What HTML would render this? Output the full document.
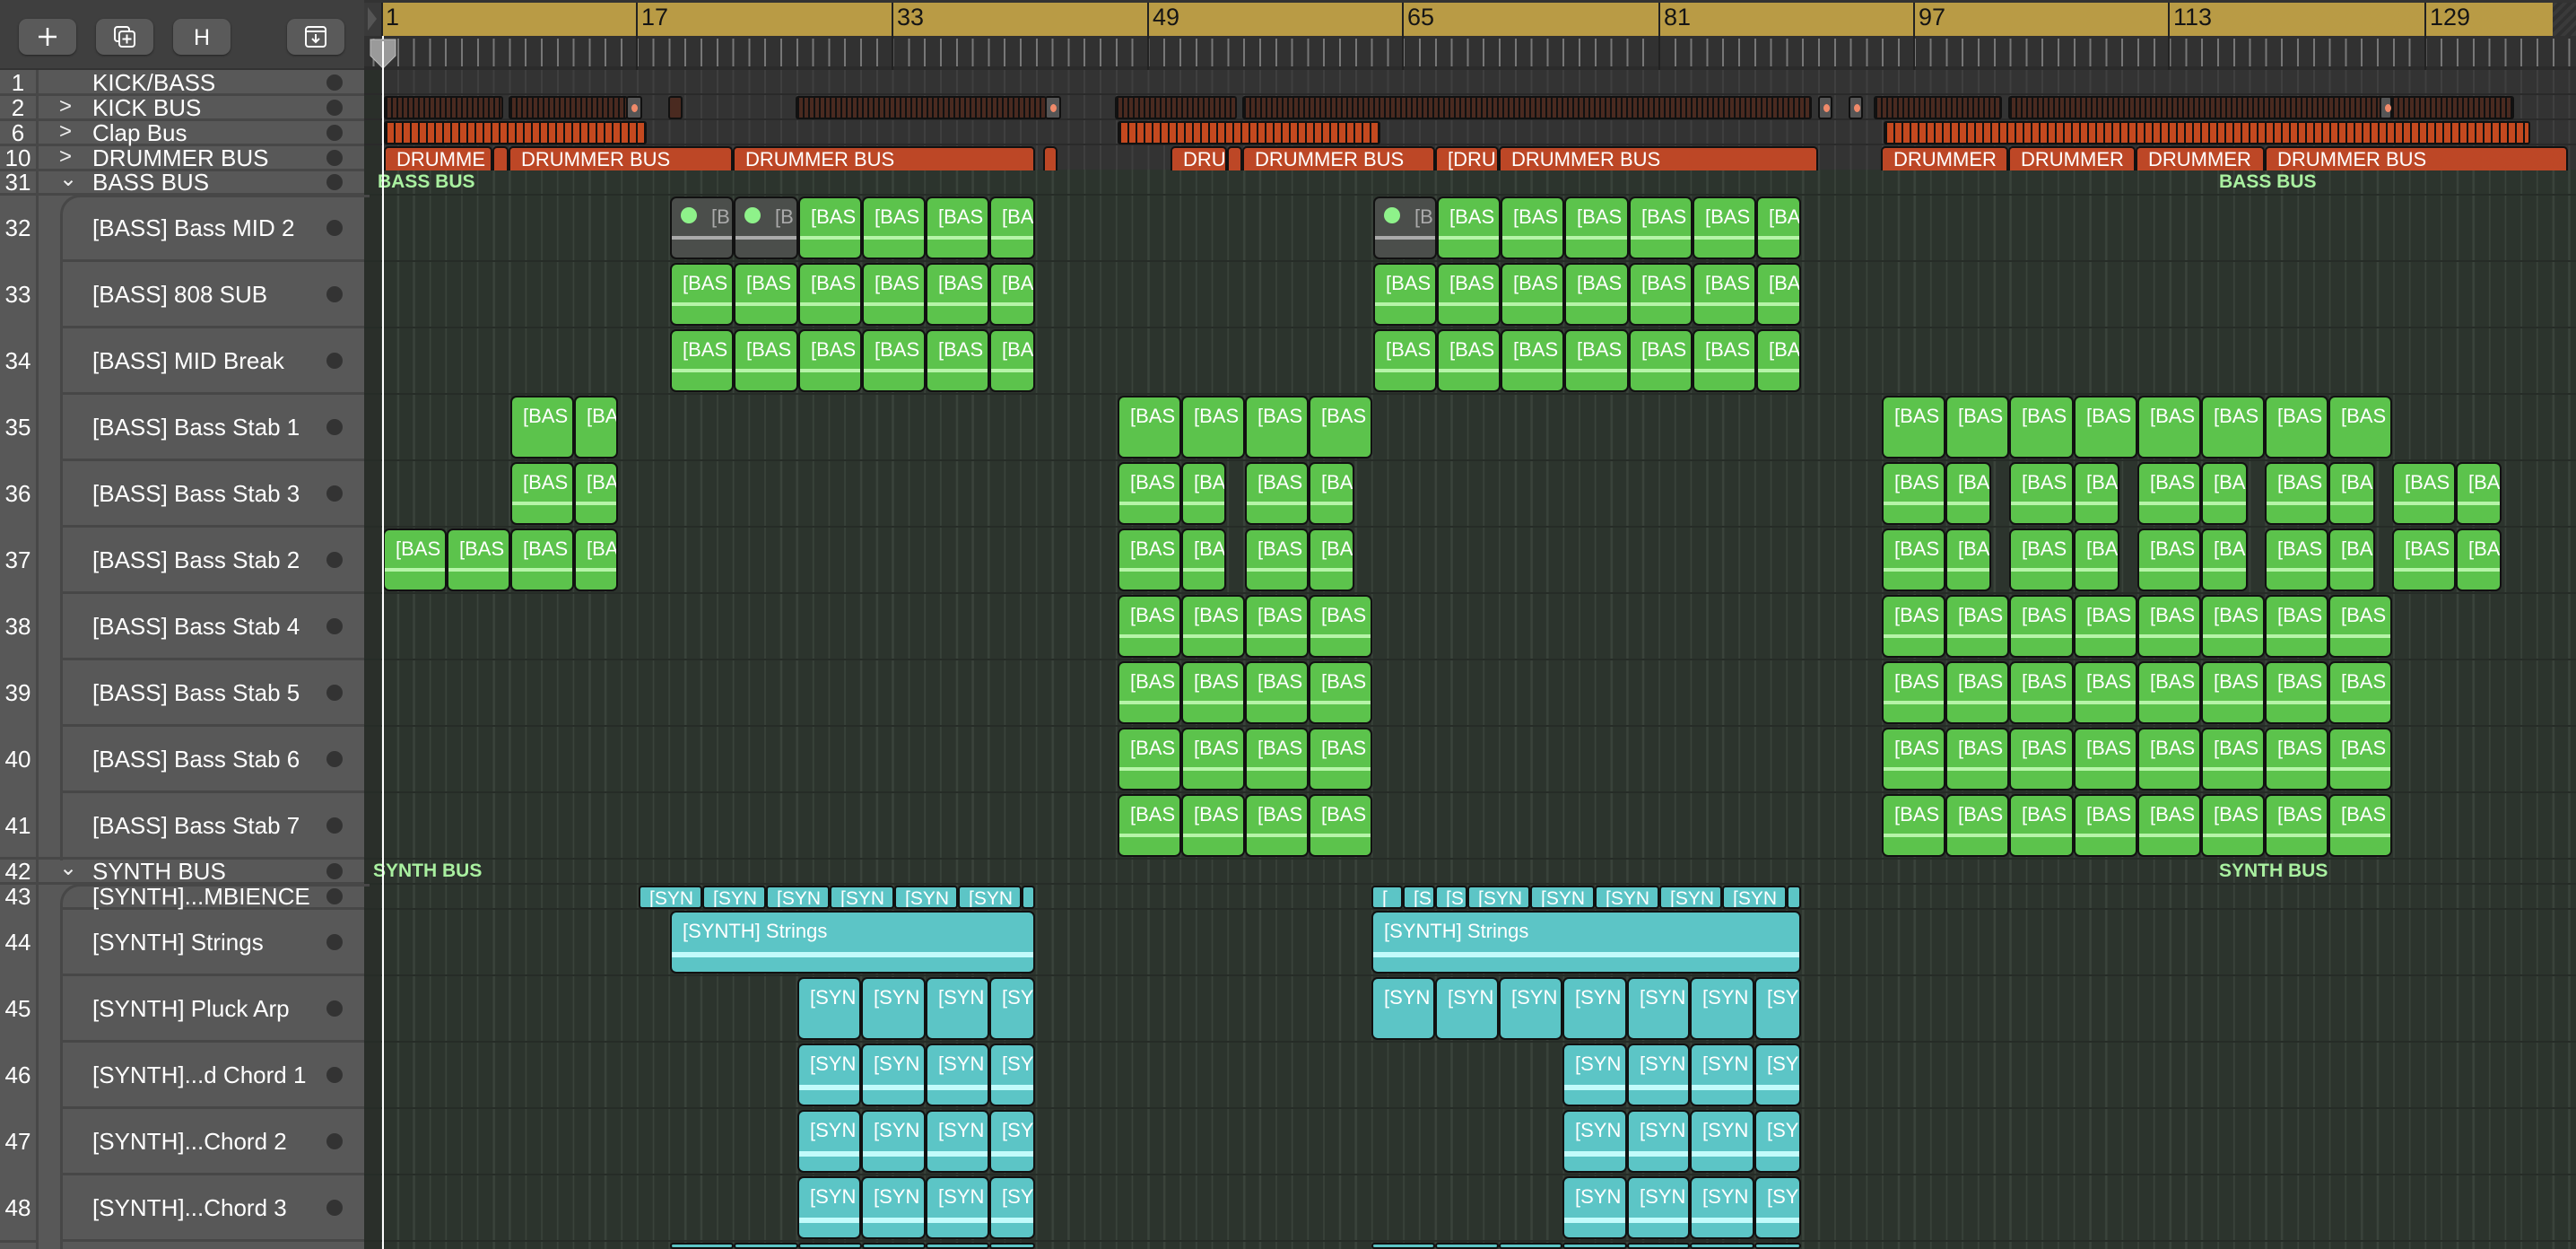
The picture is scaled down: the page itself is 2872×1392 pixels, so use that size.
<!DOCTYPE html>
<html style="width:2872px;height:1392px;overflow:hidden"><head><meta charset="utf-8"><style>
*{margin:0;padding:0}
html,body{overflow:hidden}
body{width:2872px;height:1392px;position:relative;overflow:hidden;background:#2c342d;font-family:"Liberation Sans",sans-serif}
.wrap{position:absolute;left:0;top:0;width:2872px;height:1392px;overflow:hidden}
.a{position:absolute}
.side{left:0;top:0;width:406px;height:1392px;background:#585858}
.tb{left:0;top:0;width:406px;height:78px;background:#3f3f3f;border-bottom:2px solid #333;box-sizing:border-box}
.btn{position:absolute;top:21px;width:64px;height:40px;background:#5a5a5a;border-radius:9px;box-shadow:0 1px 2px #222}
.btn svg{position:absolute;left:17px;top:5px}
.num{position:absolute;left:0;width:40px;text-align:center;color:#fff;font-size:26px}
.nm{position:absolute;left:103px;color:#fff;font-size:26px;white-space:nowrap}
.dot{position:absolute;left:364px;width:18px;height:18px;border-radius:50%;background:#333}
.chev{position:absolute;left:66px;color:#eee;font-size:24px}
.hl{position:absolute;height:3px;background:#474747;right:0}
.c{position:absolute;box-sizing:border-box;border:2px solid #111;border-radius:7px;overflow:hidden;color:#fff;font-size:22px;height:70px}
.c span{position:absolute;left:12px;top:8px;white-space:nowrap}
.c i{position:absolute;left:0;right:0;top:42px;height:4px}
.g{background:#5cc34c}.g i{background:#b6f4a8}
.t{background:#5cc5c6}.t i{background:#c2fbfb;height:6px;top:44px}
.gr{background:#4b4e4b}.gr span{color:#aaa;left:44px}.gr i{background:#aaa}
.gr b{position:absolute;left:10px;top:10px;width:18px;height:18px;border-radius:50%;background:#8ef28a}
.s{height:26px;font-size:21px;border-radius:4px}.s span{top:1px;left:10px}
.k{top:107px;height:26px;border-radius:3px;background:repeating-linear-gradient(90deg,#111 0 2px,#4a2a20 2px 6px);border:2px solid #111;box-sizing:border-box;position:absolute}
.kg{top:107px;height:26px;background:#555;border:2px solid #111;box-sizing:border-box;position:absolute;border-radius:3px}
.kg:after{content:"";position:absolute;left:4px;top:7px;width:7px;height:9px;border-radius:50%;background:#f08a6a}
.cl{top:135px;height:26px;border-radius:3px;background:repeating-linear-gradient(90deg,#111 0 2px,#c4491f 2px 9px);border:2px solid #111;box-sizing:border-box;position:absolute}
.d{position:absolute;top:163px;height:27px;background:#bd4726;border:2px solid #111;border-bottom:none;box-sizing:border-box;border-radius:5px 5px 0 0;color:#fff;font-size:22px;overflow:hidden;white-space:nowrap}
.d span{position:absolute;left:12px;top:0}
.bus{position:absolute;color:#a9f0a0;font-weight:bold;font-size:21px;white-space:nowrap}
.r32{top:219px}.r33{top:293px}.r34{top:367px}.r35{top:441px}.r36{top:515px}.r37{top:589px}.r38{top:663px}.r39{top:737px}.r40{top:811px}.r41{top:885px}.r43{top:987px}.r44{top:1015px}.r45{top:1089px}.r46{top:1163px}.r47{top:1237px}.r48{top:1311px}.r49{top:1385px}
.rl{position:absolute;top:3px;height:37px;width:2px;background:#222}
.rn{position:absolute;top:4px;font-size:27px;color:#151515}
</style></head><body><div class="wrap">
<div class="a" style="left:406px;top:78px;width:2466px;height:111px;background:#333 repeating-linear-gradient(90deg,#3f3f3f 0 2px,transparent 2px 17.8px) 19px 0"></div>
<div class="a" style="left:406px;top:189px;width:2466px;height:1203px;background:#2c342d repeating-linear-gradient(90deg,#3a433b 0 2px,transparent 2px 17.8px) 19px 0"></div>
<div class="a" style="left:406px;top:78px;width:19px;height:1314px;background:#2a2f2a"></div>
<div class="a" style="left:406px;top:104px;width:2466px;height:2px;background:#2a2a2a"></div>
<div class="a" style="left:406px;top:132px;width:2466px;height:2px;background:#2a2a2a"></div>
<div class="a" style="left:406px;top:160px;width:2466px;height:2px;background:#2a2a2a"></div>
<div class="a" style="left:406px;top:216px;width:2466px;height:2px;background:#262c27"></div>
<div class="a" style="left:406px;top:290px;width:2466px;height:2px;background:#262c27"></div>
<div class="a" style="left:406px;top:364px;width:2466px;height:2px;background:#262c27"></div>
<div class="a" style="left:406px;top:438px;width:2466px;height:2px;background:#262c27"></div>
<div class="a" style="left:406px;top:512px;width:2466px;height:2px;background:#262c27"></div>
<div class="a" style="left:406px;top:586px;width:2466px;height:2px;background:#262c27"></div>
<div class="a" style="left:406px;top:660px;width:2466px;height:2px;background:#262c27"></div>
<div class="a" style="left:406px;top:734px;width:2466px;height:2px;background:#262c27"></div>
<div class="a" style="left:406px;top:808px;width:2466px;height:2px;background:#262c27"></div>
<div class="a" style="left:406px;top:882px;width:2466px;height:2px;background:#262c27"></div>
<div class="a" style="left:406px;top:956px;width:2466px;height:2px;background:#262c27"></div>
<div class="a" style="left:406px;top:984px;width:2466px;height:2px;background:#262c27"></div>
<div class="a" style="left:406px;top:1012px;width:2466px;height:2px;background:#262c27"></div>
<div class="a" style="left:406px;top:1086px;width:2466px;height:2px;background:#262c27"></div>
<div class="a" style="left:406px;top:1160px;width:2466px;height:2px;background:#262c27"></div>
<div class="a" style="left:406px;top:1234px;width:2466px;height:2px;background:#262c27"></div>
<div class="a" style="left:406px;top:1308px;width:2466px;height:2px;background:#262c27"></div>
<div class="a" style="left:406px;top:1382px;width:2466px;height:2px;background:#262c27"></div>

<div class="a" style="left:406px;top:0;width:2466px;height:3px;background:#333"></div>
<div class="a" style="left:425px;top:3px;width:2421px;height:37px;background:#b99b45"></div>
<div class="a" style="left:2846px;top:3px;width:26px;height:37px;background:repeating-linear-gradient(135deg,#3a3a3a 0 4px,#303030 4px 8px)"></div>
<div class="a" style="left:406px;top:3px;width:19px;height:37px;background:#3a3a3a"></div>
<svg class="a" style="left:408px;top:6px" width="14" height="30"><path d="M2 2 L12 15 L2 28 Z" fill="#555"/></svg>
<div class="a" style="left:406px;top:40px;width:2466px;height:38px;background:#313131 repeating-linear-gradient(90deg,#777 0 2px,transparent 2px 17.8px);background-size:auto 32px;background-repeat:repeat-x;background-position:19px 3px"></div>
<div class="a" style="left:406px;top:74px;width:2466px;height:4px;background:#2b2b2b"></div>
<div class="rl" style="left:425px"></div><div class="rn" style="left:430px">1</div>
<div class="rl" style="left:709px;height:75px"></div><div class="rn" style="left:715px">17</div>
<div class="rl" style="left:994px;height:75px"></div><div class="rn" style="left:1000px">33</div>
<div class="rl" style="left:1279px;height:75px"></div><div class="rn" style="left:1285px">49</div>
<div class="rl" style="left:1563px;height:75px"></div><div class="rn" style="left:1569px">65</div>
<div class="rl" style="left:1849px;height:75px"></div><div class="rn" style="left:1855px">81</div>
<div class="rl" style="left:2133px;height:75px"></div><div class="rn" style="left:2139px">97</div>
<div class="rl" style="left:2417px;height:75px"></div><div class="rn" style="left:2423px">113</div>
<div class="rl" style="left:2703px;height:75px"></div><div class="rn" style="left:2709px">129</div>

<div class="k" style="left:428px;width:133px"></div>
<div class="k" style="left:567px;width:133px"></div><div class="kg" style="left:698px;width:18px"></div>
<div class="k" style="left:745px;width:16px;background:#4a2a20"></div>
<div class="k" style="left:887px;width:280px"></div><div class="kg" style="left:1165px;width:18px"></div>
<div class="k" style="left:1243px;width:136px"></div>
<div class="k" style="left:1385px;width:635px"></div>
<div class="kg" style="left:2027px;width:16px"></div>
<div class="kg" style="left:2061px;width:16px"></div>
<div class="k" style="left:2089px;width:143px"></div>
<div class="k" style="left:2239px;width:564px"></div><div class="kg" style="left:2653px;width:14px"></div>
<div class="cl" style="left:428px;width:293px"></div>
<div class="cl" style="left:1246px;width:293px"></div>
<div class="cl" style="left:2100px;width:721px"></div>
<div class="d" style="left:428px;width:121px"><span>DRUMME</span></div>
<div class="d" style="left:549px;width:18px"></div>
<div class="d" style="left:567px;width:250px"><span>DRUMMER BUS</span></div>
<div class="d" style="left:817px;width:337px"><span>DRUMMER BUS</span></div>
<div class="d" style="left:1163px;width:16px"></div>
<div class="d" style="left:1305px;width:63px"><span>DRU</span></div>
<div class="d" style="left:1368px;width:17px"></div>
<div class="d" style="left:1385px;width:215px"><span>DRUMMER BUS</span></div>
<div class="d" style="left:1600px;width:71px"><span>[DRU</span></div>
<div class="d" style="left:1671px;width:356px"><span>DRUMMER BUS</span></div>
<div class="d" style="left:2097px;width:142px"><span>DRUMMER</span></div>
<div class="d" style="left:2239px;width:142px"><span>DRUMMER</span></div>
<div class="d" style="left:2381px;width:144px"><span>DRUMMER</span></div>
<div class="d" style="left:2525px;width:338px"><span>DRUMMER BUS</span></div>

<div class="bus" style="left:421px;top:191px">BASS BUS</div>
<div class="bus" style="left:2474px;top:191px">BASS BUS</div>
<div class="bus" style="left:416px;top:959px">SYNTH BUS</div>
<div class="bus" style="left:2474px;top:959px">SYNTH BUS</div>

<div class="c gr r32" style="left:747px;width:71px"><b></b><span>[B</span><i></i></div>
<div class="c gr r32" style="left:818px;width:72px"><b></b><span>[B</span><i></i></div>
<div class="c g r32" style="left:890px;width:71px"><span>[BAS</span><i></i></div>
<div class="c g r32" style="left:961px;width:71px"><span>[BAS</span><i></i></div>
<div class="c g r32" style="left:1032px;width:71px"><span>[BAS</span><i></i></div>
<div class="c g r32" style="left:1103px;width:51px"><span>[BA</span><i></i></div>
<div class="c gr r32" style="left:1531px;width:71px"><b></b><span>[B</span><i></i></div>
<div class="c g r32" style="left:1602px;width:71px"><span>[BAS</span><i></i></div>
<div class="c g r32" style="left:1673px;width:71px"><span>[BAS</span><i></i></div>
<div class="c g r32" style="left:1744px;width:72px"><span>[BAS</span><i></i></div>
<div class="c g r32" style="left:1816px;width:71px"><span>[BAS</span><i></i></div>
<div class="c g r32" style="left:1887px;width:71px"><span>[BAS</span><i></i></div>
<div class="c g r32" style="left:1958px;width:50px"><span>[BA</span><i></i></div>
<div class="c g r33" style="left:747px;width:71px"><span>[BAS</span><i></i></div>
<div class="c g r33" style="left:818px;width:72px"><span>[BAS</span><i></i></div>
<div class="c g r33" style="left:890px;width:71px"><span>[BAS</span><i></i></div>
<div class="c g r33" style="left:961px;width:71px"><span>[BAS</span><i></i></div>
<div class="c g r33" style="left:1032px;width:71px"><span>[BAS</span><i></i></div>
<div class="c g r33" style="left:1103px;width:51px"><span>[BA</span><i></i></div>
<div class="c g r33" style="left:1531px;width:71px"><span>[BAS</span><i></i></div>
<div class="c g r33" style="left:1602px;width:71px"><span>[BAS</span><i></i></div>
<div class="c g r33" style="left:1673px;width:71px"><span>[BAS</span><i></i></div>
<div class="c g r33" style="left:1744px;width:72px"><span>[BAS</span><i></i></div>
<div class="c g r33" style="left:1816px;width:71px"><span>[BAS</span><i></i></div>
<div class="c g r33" style="left:1887px;width:71px"><span>[BAS</span><i></i></div>
<div class="c g r33" style="left:1958px;width:50px"><span>[BA</span><i></i></div>
<div class="c g r34" style="left:747px;width:71px"><span>[BAS</span><i></i></div>
<div class="c g r34" style="left:818px;width:72px"><span>[BAS</span><i></i></div>
<div class="c g r34" style="left:890px;width:71px"><span>[BAS</span><i></i></div>
<div class="c g r34" style="left:961px;width:71px"><span>[BAS</span><i></i></div>
<div class="c g r34" style="left:1032px;width:71px"><span>[BAS</span><i></i></div>
<div class="c g r34" style="left:1103px;width:51px"><span>[BA</span><i></i></div>
<div class="c g r34" style="left:1531px;width:71px"><span>[BAS</span><i></i></div>
<div class="c g r34" style="left:1602px;width:71px"><span>[BAS</span><i></i></div>
<div class="c g r34" style="left:1673px;width:71px"><span>[BAS</span><i></i></div>
<div class="c g r34" style="left:1744px;width:72px"><span>[BAS</span><i></i></div>
<div class="c g r34" style="left:1816px;width:71px"><span>[BAS</span><i></i></div>
<div class="c g r34" style="left:1887px;width:71px"><span>[BAS</span><i></i></div>
<div class="c g r34" style="left:1958px;width:50px"><span>[BA</span><i></i></div>
<div class="c g r35" style="left:569px;width:71px"><span>[BAS</span></div>
<div class="c g r35" style="left:640px;width:49px"><span>[BA</span></div>
<div class="c g r35" style="left:1246px;width:71px"><span>[BAS</span></div>
<div class="c g r35" style="left:1317px;width:71px"><span>[BAS</span></div>
<div class="c g r35" style="left:1388px;width:71px"><span>[BAS</span></div>
<div class="c g r35" style="left:1459px;width:71px"><span>[BAS</span></div>
<div class="c g r35" style="left:2098px;width:71px"><span>[BAS</span></div>
<div class="c g r35" style="left:2169px;width:71px"><span>[BAS</span></div>
<div class="c g r35" style="left:2240px;width:72px"><span>[BAS</span></div>
<div class="c g r35" style="left:2312px;width:71px"><span>[BAS</span></div>
<div class="c g r35" style="left:2383px;width:71px"><span>[BAS</span></div>
<div class="c g r35" style="left:2454px;width:71px"><span>[BAS</span></div>
<div class="c g r35" style="left:2525px;width:71px"><span>[BAS</span></div>
<div class="c g r35" style="left:2596px;width:71px"><span>[BAS</span></div>
<div class="c g r36" style="left:569px;width:71px"><span>[BAS</span><i></i></div>
<div class="c g r36" style="left:640px;width:49px"><span>[BA</span><i></i></div>
<div class="c g r36" style="left:1246px;width:71px"><span>[BAS</span><i></i></div>
<div class="c g r36" style="left:1317px;width:50px"><span>[BA</span><i></i></div>
<div class="c g r36" style="left:1388px;width:71px"><span>[BAS</span><i></i></div>
<div class="c g r36" style="left:1459px;width:51px"><span>[BA</span><i></i></div>
<div class="c g r36" style="left:2098px;width:71px"><span>[BAS</span><i></i></div>
<div class="c g r36" style="left:2169px;width:51px"><span>[BA</span><i></i></div>
<div class="c g r36" style="left:2240px;width:72px"><span>[BAS</span><i></i></div>
<div class="c g r36" style="left:2312px;width:51px"><span>[BA</span><i></i></div>
<div class="c g r36" style="left:2383px;width:71px"><span>[BAS</span><i></i></div>
<div class="c g r36" style="left:2454px;width:52px"><span>[BA</span><i></i></div>
<div class="c g r36" style="left:2525px;width:71px"><span>[BAS</span><i></i></div>
<div class="c g r36" style="left:2596px;width:52px"><span>[BA</span><i></i></div>
<div class="c g r36" style="left:2667px;width:71px"><span>[BAS</span><i></i></div>
<div class="c g r36" style="left:2738px;width:51px"><span>[BA</span><i></i></div>
<div class="c g r37" style="left:427px;width:71px"><span>[BAS</span><i></i></div>
<div class="c g r37" style="left:498px;width:71px"><span>[BAS</span><i></i></div>
<div class="c g r37" style="left:569px;width:71px"><span>[BAS</span><i></i></div>
<div class="c g r37" style="left:640px;width:49px"><span>[BA</span><i></i></div>
<div class="c g r37" style="left:1246px;width:71px"><span>[BAS</span><i></i></div>
<div class="c g r37" style="left:1317px;width:50px"><span>[BA</span><i></i></div>
<div class="c g r37" style="left:1388px;width:71px"><span>[BAS</span><i></i></div>
<div class="c g r37" style="left:1459px;width:51px"><span>[BA</span><i></i></div>
<div class="c g r37" style="left:2098px;width:71px"><span>[BAS</span><i></i></div>
<div class="c g r37" style="left:2169px;width:51px"><span>[BA</span><i></i></div>
<div class="c g r37" style="left:2240px;width:72px"><span>[BAS</span><i></i></div>
<div class="c g r37" style="left:2312px;width:51px"><span>[BA</span><i></i></div>
<div class="c g r37" style="left:2383px;width:71px"><span>[BAS</span><i></i></div>
<div class="c g r37" style="left:2454px;width:52px"><span>[BA</span><i></i></div>
<div class="c g r37" style="left:2525px;width:71px"><span>[BAS</span><i></i></div>
<div class="c g r37" style="left:2596px;width:52px"><span>[BA</span><i></i></div>
<div class="c g r37" style="left:2667px;width:71px"><span>[BAS</span><i></i></div>
<div class="c g r37" style="left:2738px;width:51px"><span>[BA</span><i></i></div>
<div class="c g r38" style="left:1246px;width:71px"><span>[BAS</span><i></i></div><div class="c g r38" style="left:1317px;width:71px"><span>[BAS</span><i></i></div><div class="c g r38" style="left:1388px;width:71px"><span>[BAS</span><i></i></div><div class="c g r38" style="left:1459px;width:71px"><span>[BAS</span><i></i></div>
<div class="c g r38" style="left:2098px;width:71px"><span>[BAS</span><i></i></div><div class="c g r38" style="left:2169px;width:71px"><span>[BAS</span><i></i></div><div class="c g r38" style="left:2240px;width:72px"><span>[BAS</span><i></i></div><div class="c g r38" style="left:2312px;width:71px"><span>[BAS</span><i></i></div><div class="c g r38" style="left:2383px;width:71px"><span>[BAS</span><i></i></div><div class="c g r38" style="left:2454px;width:71px"><span>[BAS</span><i></i></div><div class="c g r38" style="left:2525px;width:71px"><span>[BAS</span><i></i></div><div class="c g r38" style="left:2596px;width:71px"><span>[BAS</span><i></i></div>
<div class="c g r39" style="left:1246px;width:71px"><span>[BAS</span><i></i></div><div class="c g r39" style="left:1317px;width:71px"><span>[BAS</span><i></i></div><div class="c g r39" style="left:1388px;width:71px"><span>[BAS</span><i></i></div><div class="c g r39" style="left:1459px;width:71px"><span>[BAS</span><i></i></div>
<div class="c g r39" style="left:2098px;width:71px"><span>[BAS</span><i></i></div><div class="c g r39" style="left:2169px;width:71px"><span>[BAS</span><i></i></div><div class="c g r39" style="left:2240px;width:72px"><span>[BAS</span><i></i></div><div class="c g r39" style="left:2312px;width:71px"><span>[BAS</span><i></i></div><div class="c g r39" style="left:2383px;width:71px"><span>[BAS</span><i></i></div><div class="c g r39" style="left:2454px;width:71px"><span>[BAS</span><i></i></div><div class="c g r39" style="left:2525px;width:71px"><span>[BAS</span><i></i></div><div class="c g r39" style="left:2596px;width:71px"><span>[BAS</span><i></i></div>
<div class="c g r40" style="left:1246px;width:71px"><span>[BAS</span><i></i></div><div class="c g r40" style="left:1317px;width:71px"><span>[BAS</span><i></i></div><div class="c g r40" style="left:1388px;width:71px"><span>[BAS</span><i></i></div><div class="c g r40" style="left:1459px;width:71px"><span>[BAS</span><i></i></div>
<div class="c g r40" style="left:2098px;width:71px"><span>[BAS</span><i></i></div><div class="c g r40" style="left:2169px;width:71px"><span>[BAS</span><i></i></div><div class="c g r40" style="left:2240px;width:72px"><span>[BAS</span><i></i></div><div class="c g r40" style="left:2312px;width:71px"><span>[BAS</span><i></i></div><div class="c g r40" style="left:2383px;width:71px"><span>[BAS</span><i></i></div><div class="c g r40" style="left:2454px;width:71px"><span>[BAS</span><i></i></div><div class="c g r40" style="left:2525px;width:71px"><span>[BAS</span><i></i></div><div class="c g r40" style="left:2596px;width:71px"><span>[BAS</span><i></i></div>
<div class="c g r41" style="left:1246px;width:71px"><span>[BAS</span><i></i></div><div class="c g r41" style="left:1317px;width:71px"><span>[BAS</span><i></i></div><div class="c g r41" style="left:1388px;width:71px"><span>[BAS</span><i></i></div><div class="c g r41" style="left:1459px;width:71px"><span>[BAS</span><i></i></div>
<div class="c g r41" style="left:2098px;width:71px"><span>[BAS</span><i></i></div><div class="c g r41" style="left:2169px;width:71px"><span>[BAS</span><i></i></div><div class="c g r41" style="left:2240px;width:72px"><span>[BAS</span><i></i></div><div class="c g r41" style="left:2312px;width:71px"><span>[BAS</span><i></i></div><div class="c g r41" style="left:2383px;width:71px"><span>[BAS</span><i></i></div><div class="c g r41" style="left:2454px;width:71px"><span>[BAS</span><i></i></div><div class="c g r41" style="left:2525px;width:71px"><span>[BAS</span><i></i></div><div class="c g r41" style="left:2596px;width:71px"><span>[BAS</span><i></i></div>

<div class="c t s r43" style="left:712px;width:71px"><span>[SYN</span></div>
<div class="c t s r43" style="left:783px;width:71px"><span>[SYN</span></div>
<div class="c t s r43" style="left:854px;width:71px"><span>[SYN</span></div>
<div class="c t s r43" style="left:925px;width:72px"><span>[SYN</span></div>
<div class="c t s r43" style="left:997px;width:71px"><span>[SYN</span></div>
<div class="c t s r43" style="left:1068px;width:71px"><span>[SYN</span></div>
<div class="c t s r43" style="left:1139px;width:15px"></div>
<div class="c t s r43" style="left:1529px;width:35px"><span>[</span></div>
<div class="c t s r43" style="left:1564px;width:36px"><span>[S</span></div>
<div class="c t s r43" style="left:1600px;width:36px"><span>[S</span></div>
<div class="c t s r43" style="left:1636px;width:70px"><span>[SYN</span></div>
<div class="c t s r43" style="left:1706px;width:72px"><span>[SYN</span></div>
<div class="c t s r43" style="left:1778px;width:72px"><span>[SYN</span></div>
<div class="c t s r43" style="left:1850px;width:70px"><span>[SYN</span></div>
<div class="c t s r43" style="left:1920px;width:72px"><span>[SYN</span></div>
<div class="c t s r43" style="left:1992px;width:16px"></div>
<div class="c t r44" style="left:747px;width:407px"><span>[SYNTH] Strings</span><i></i></div>
<div class="c t r44" style="left:1529px;width:479px"><span>[SYNTH] Strings</span><i></i></div>
<div class="c t r45" style="left:889px;width:71px"><span>[SYN</span></div><div class="c t r45" style="left:960px;width:72px"><span>[SYN</span></div><div class="c t r45" style="left:1032px;width:71px"><span>[SYN</span></div><div class="c t r45" style="left:1103px;width:51px"><span>[SY</span></div>
<div class="c t r45" style="left:1529px;width:71px"><span>[SYN</span></div><div class="c t r45" style="left:1600px;width:71px"><span>[SYN</span></div><div class="c t r45" style="left:1671px;width:71px"><span>[SYN</span></div><div class="c t r45" style="left:1742px;width:72px"><span>[SYN</span></div><div class="c t r45" style="left:1814px;width:70px"><span>[SYN</span></div><div class="c t r45" style="left:1884px;width:72px"><span>[SYN</span></div><div class="c t r45" style="left:1956px;width:52px"><span>[SY</span></div>
<div class="c t r46" style="left:889px;width:71px"><span>[SYN</span><i></i></div><div class="c t r46" style="left:960px;width:72px"><span>[SYN</span><i></i></div><div class="c t r46" style="left:1032px;width:71px"><span>[SYN</span><i></i></div><div class="c t r46" style="left:1103px;width:51px"><span>[SY</span><i></i></div>
<div class="c t r46" style="left:1742px;width:72px"><span>[SYN</span><i></i></div><div class="c t r46" style="left:1814px;width:70px"><span>[SYN</span><i></i></div><div class="c t r46" style="left:1884px;width:72px"><span>[SYN</span><i></i></div><div class="c t r46" style="left:1956px;width:52px"><span>[SY</span><i></i></div>
<div class="c t r47" style="left:889px;width:71px"><span>[SYN</span><i></i></div><div class="c t r47" style="left:960px;width:72px"><span>[SYN</span><i></i></div><div class="c t r47" style="left:1032px;width:71px"><span>[SYN</span><i></i></div><div class="c t r47" style="left:1103px;width:51px"><span>[SY</span><i></i></div>
<div class="c t r47" style="left:1742px;width:72px"><span>[SYN</span><i></i></div><div class="c t r47" style="left:1814px;width:70px"><span>[SYN</span><i></i></div><div class="c t r47" style="left:1884px;width:72px"><span>[SYN</span><i></i></div><div class="c t r47" style="left:1956px;width:52px"><span>[SY</span><i></i></div>
<div class="c t r48" style="left:889px;width:71px"><span>[SYN</span><i></i></div><div class="c t r48" style="left:960px;width:72px"><span>[SYN</span><i></i></div><div class="c t r48" style="left:1032px;width:71px"><span>[SYN</span><i></i></div><div class="c t r48" style="left:1103px;width:51px"><span>[SY</span><i></i></div>
<div class="c t r48" style="left:1742px;width:72px"><span>[SYN</span><i></i></div><div class="c t r48" style="left:1814px;width:70px"><span>[SYN</span><i></i></div><div class="c t r48" style="left:1884px;width:72px"><span>[SYN</span><i></i></div><div class="c t r48" style="left:1956px;width:52px"><span>[SY</span><i></i></div>
<div class="c t r49" style="left:747px;width:71px;height:7px"></div><div class="c t r49" style="left:818px;width:72px;height:7px"></div><div class="c t r49" style="left:890px;width:71px;height:7px"></div><div class="c t r49" style="left:961px;width:71px;height:7px"></div><div class="c t r49" style="left:1032px;width:71px;height:7px"></div><div class="c t r49" style="left:1103px;width:51px;height:7px"></div>
<div class="c t r49" style="left:1529px;width:71px;height:7px"></div><div class="c t r49" style="left:1600px;width:71px;height:7px"></div><div class="c t r49" style="left:1671px;width:71px;height:7px"></div><div class="c t r49" style="left:1742px;width:72px;height:7px"></div><div class="c t r49" style="left:1814px;width:70px;height:7px"></div><div class="c t r49" style="left:1884px;width:72px;height:7px"></div><div class="c t r49" style="left:1956px;width:52px;height:7px"></div>

<div class="a" style="left:426px;top:40px;width:2px;height:1352px;background:#fff"></div>
<svg class="a" style="left:410px;top:42px" width="34" height="36"><path d="M3 2 H31 V20 L17 34 L3 20 Z" fill="#9a9a9a" stroke="#bbb" stroke-width="1"/><rect x="16" y="4" width="2" height="32" fill="#fff"/></svg>

<div class="a side"></div>
<div class="a tb">
<div class="btn" style="left:21px"><svg width="30" height="30"><path d="M15 5V25M5 15H25" stroke="#fff" stroke-width="2.5"/></svg></div>
<div class="btn" style="left:107px"><svg width="30" height="30"><rect x="4" y="4" width="16" height="16" rx="3" fill="none" stroke="#fff" stroke-width="2"/><rect x="9" y="9" width="17" height="17" rx="3" fill="#5a5a5a" stroke="#fff" stroke-width="2"/><path d="M17.5 12.5V22.5M12.5 17.5H22.5" stroke="#fff" stroke-width="2"/></svg></div>
<div class="btn" style="left:193px"><svg width="30" height="30"><text x="6" y="24" fill="#fff" font-size="25" font-family="Liberation Sans">H</text></svg></div>
<div class="btn" style="left:320px"><svg width="30" height="30"><rect x="4" y="4" width="22" height="22" rx="3" fill="none" stroke="#fff" stroke-width="2"/><path d="M4 9H26M15 12V21M11 17L15 21L19 17" stroke="#fff" stroke-width="2" fill="none"/></svg></div>
</div>
<div class="a" style="left:40px;top:78px;width:3px;height:1314px;background:#474747"></div>
<div class="a" style="left:67px;top:217px;width:345px;height:742px;border-left:3px solid #474747;border-top:3px solid #474747;border-radius:22px 0 0 0;box-sizing:border-box"></div>
<div class="a" style="left:67px;top:985px;width:345px;height:420px;border-left:3px solid #474747;border-top:3px solid #474747;border-radius:22px 0 0 0;box-sizing:border-box"></div>
<div class="hl" style="left:0;top:104px;width:406px"></div>
<div class="hl" style="left:0;top:132px;width:406px"></div>
<div class="hl" style="left:0;top:160px;width:406px"></div>
<div class="hl" style="left:0;top:188px;width:406px"></div>
<div class="hl" style="left:0;top:215px;width:406px"></div>
<div class="hl" style="left:67px;top:289px;width:339px"></div>
<div class="hl" style="left:67px;top:363px;width:339px"></div>
<div class="hl" style="left:67px;top:437px;width:339px"></div>
<div class="hl" style="left:67px;top:511px;width:339px"></div>
<div class="hl" style="left:67px;top:585px;width:339px"></div>
<div class="hl" style="left:67px;top:659px;width:339px"></div>
<div class="hl" style="left:67px;top:733px;width:339px"></div>
<div class="hl" style="left:67px;top:807px;width:339px"></div>
<div class="hl" style="left:67px;top:881px;width:339px"></div>
<div class="hl" style="left:0;top:955px;width:406px"></div>
<div class="hl" style="left:0;top:983px;width:406px"></div>
<div class="hl" style="left:67px;top:1011px;width:339px"></div>
<div class="hl" style="left:67px;top:1085px;width:339px"></div>
<div class="hl" style="left:67px;top:1159px;width:339px"></div>
<div class="hl" style="left:67px;top:1233px;width:339px"></div>
<div class="hl" style="left:67px;top:1307px;width:339px"></div>
<div class="hl" style="left:67px;top:1381px;width:339px"></div>
<div class="a" style="left:0;top:1382px;width:43px;height:3px;background:#474747"></div>

<div class="num" style="top:77px">1</div><div class="nm" style="top:77px">KICK/BASS</div><div class="dot" style="top:83px"></div>
<div class="num" style="top:105px">2</div><div class="chev" style="top:105px">&gt;</div><div class="nm" style="top:105px">KICK BUS</div><div class="dot" style="top:111px"></div>
<div class="num" style="top:133px">6</div><div class="chev" style="top:133px">&gt;</div><div class="nm" style="top:133px">Clap Bus</div><div class="dot" style="top:139px"></div>
<div class="num" style="top:161px">10</div><div class="chev" style="top:161px">&gt;</div><div class="nm" style="top:161px">DRUMMER BUS</div><div class="dot" style="top:167px"></div>
<div class="num" style="top:188px">31</div><div class="chev" style="top:185px">&#8964;</div><div class="nm" style="top:188px">BASS BUS</div><div class="dot" style="top:194px"></div>
<div class="num" style="top:239px">32</div><div class="nm" style="top:239px">[BASS] Bass MID 2</div><div class="dot" style="top:245px"></div>
<div class="num" style="top:313px">33</div><div class="nm" style="top:313px">[BASS] 808 SUB</div><div class="dot" style="top:319px"></div>
<div class="num" style="top:387px">34</div><div class="nm" style="top:387px">[BASS] MID Break</div><div class="dot" style="top:393px"></div>
<div class="num" style="top:461px">35</div><div class="nm" style="top:461px">[BASS] Bass Stab 1</div><div class="dot" style="top:467px"></div>
<div class="num" style="top:535px">36</div><div class="nm" style="top:535px">[BASS] Bass Stab 3</div><div class="dot" style="top:541px"></div>
<div class="num" style="top:609px">37</div><div class="nm" style="top:609px">[BASS] Bass Stab 2</div><div class="dot" style="top:615px"></div>
<div class="num" style="top:683px">38</div><div class="nm" style="top:683px">[BASS] Bass Stab 4</div><div class="dot" style="top:689px"></div>
<div class="num" style="top:757px">39</div><div class="nm" style="top:757px">[BASS] Bass Stab 5</div><div class="dot" style="top:763px"></div>
<div class="num" style="top:831px">40</div><div class="nm" style="top:831px">[BASS] Bass Stab 6</div><div class="dot" style="top:837px"></div>
<div class="num" style="top:905px">41</div><div class="nm" style="top:905px">[BASS] Bass Stab 7</div><div class="dot" style="top:911px"></div>
<div class="num" style="top:956px">42</div><div class="chev" style="top:953px">&#8964;</div><div class="nm" style="top:956px">SYNTH BUS</div><div class="dot" style="top:962px"></div>
<div class="num" style="top:984px">43</div><div class="nm" style="top:984px">[SYNTH]...MBIENCE</div><div class="dot" style="top:990px"></div>
<div class="num" style="top:1035px">44</div><div class="nm" style="top:1035px">[SYNTH] Strings</div><div class="dot" style="top:1041px"></div>
<div class="num" style="top:1109px">45</div><div class="nm" style="top:1109px">[SYNTH] Pluck Arp</div><div class="dot" style="top:1115px"></div>
<div class="num" style="top:1183px">46</div><div class="nm" style="top:1183px">[SYNTH]...d Chord 1</div><div class="dot" style="top:1189px"></div>
<div class="num" style="top:1257px">47</div><div class="nm" style="top:1257px">[SYNTH]...Chord 2</div><div class="dot" style="top:1263px"></div>
<div class="num" style="top:1331px">48</div><div class="nm" style="top:1331px">[SYNTH]...Chord 3</div><div class="dot" style="top:1337px"></div>
</div></body></html>
